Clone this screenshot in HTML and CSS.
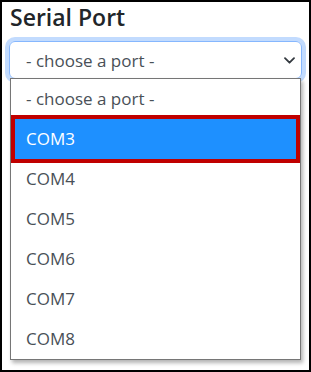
FILE: index.html
```html
<!DOCTYPE html>
<html>
<head>
<meta charset="utf-8">
<link rel="stylesheet" href="styles.css">
</head>
<body>
<div class="frame">
  <div class="title">Serial Port</div>
  <div class="picker">
    <div class="select">
      <span class="select-text">- choose a port -</span>
      <svg class="chevron" width="11" height="7" viewBox="0 0 11 7"><path d="M1 1.2 5.5 5.7 10 1.2" fill="none" stroke="#343a40" stroke-width="1.8" stroke-linecap="round" stroke-linejoin="round"/></svg>
    </div>
    <ul class="menu">
      <li class="option">- choose a port -</li>
      <li class="option selected">COM3</li>
      <li class="option">COM4</li>
      <li class="option">COM5</li>
      <li class="option">COM6</li>
      <li class="option">COM7</li>
      <li class="option">COM8</li>
    </ul>
  </div>
</div>
</body>
</html>
```
FILE: styles.css
```css
html, body {
  margin: 0;
  padding: 0;
  background: #fff;
}
.frame {
  width: 311px;
  height: 372px;
  box-sizing: border-box;
  border: 2px solid #000;
  padding: 0 7px;
  font-family: "Open Sans", "Noto Sans", sans-serif;
}
.title {
  font-size: 23px;
  font-weight: 600;
  color: #212529;
  line-height: 28px;
  margin-top: 1px;
  padding-left: 1px;
}
.picker {
  position: relative;
  margin-top: 10px;
}
.select {
  height: 38px;
  box-sizing: border-box;
  border: 1px solid #86b7fe;
  border-radius: 6px;
  box-shadow: 0 0 0 4px #c2dbfe;
  display: flex;
  align-items: center;
  justify-content: space-between;
  padding: 0 6px 0 16px;
  color: #495057;
  font-size: 17px;
}
.chevron {
  display: block;
}
.menu {
  position: absolute;
  top: 37px;
  left: 1px;
  width: 291px;
  box-sizing: border-box;
  margin: 0;
  padding: 0;
  list-style: none;
  background: #fff;
  border: 1px solid #767676;
  box-shadow: 2px 3px 4px rgba(0,0,0,0.3);
}
.option {
  height: 40px;
  line-height: 40px;
  padding-left: 15px;
  font-size: 17px;
  color: #495057;
}
.selected {
  position: relative;
  background: #1e90ff;
  color: #fff;
}
.selected::after {
  content: "";
  position: absolute;
  left: 0;
  right: 0;
  top: -4px;
  bottom: -4px;
  border: 4px solid #c00000;
}
```
